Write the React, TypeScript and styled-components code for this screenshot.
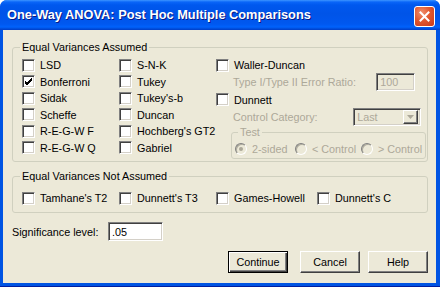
import React from "react";
import styled, { createGlobalStyle } from "styled-components";

const GlobalStyle = createGlobalStyle`
  html, body {
    margin: 0;
    padding: 0;
    background: #ffffff;
  }
  body {
    font-family: "Liberation Sans", Arial, sans-serif;
    font-size: 10.8px;
    color: #000000;
  }
`;

const Window = styled.div`
  width: 440px;
  height: 287px;
  box-sizing: border-box;
  display: flex;
  flex-direction: column;
  background: #0054e3;
  border-radius: 7px 7px 0 0;
  overflow: hidden;
  border-bottom: 1px solid #001ea0;
`;

const TitleBar = styled.div`
  height: 30px;
  flex: 0 0 30px;
  display: flex;
  align-items: flex-start;
  justify-content: space-between;
  padding: 0 5px 0 7px;
  box-sizing: border-box;
  background: linear-gradient(
    to bottom,
    #3d95ff 0px,
    #0a66f8 2px,
    #0058ee 5px,
    #0054e8 14px,
    #0058f0 24px,
    #0062fc 27px,
    #0049d6 29px,
    #003dc8 30px
  );
`;

const Title = styled.span`
  margin-top: 7px;
  font-family: "Liberation Sans", Arial, sans-serif;
  font-weight: bold;
  font-size: 12.8px;
  color: #ffffff;
  text-shadow: 1px 1px 0 #0a1883;
  white-space: nowrap;
`;

const CloseButton = styled.div`
  margin-top: 6px;
  width: 21px;
  height: 21px;
  box-sizing: border-box;
  border: 1px solid #ffffff;
  border-radius: 3px;
  background: radial-gradient(circle at 35% 30%, #f1906e 0%, #e2582f 45%, #c8381a 100%);
  display: flex;
  align-items: center;
  justify-content: center;
`;

const Client = styled.div`
  flex: 1;
  margin: 0 4px 3px 3px;
  background: #ece9d8;
  padding: 11px 8px 0 9px;
  display: flex;
  flex-direction: column;
`;

const GroupBox = styled.fieldset<{ $top?: number }>`
  margin: ${(p) => p.$top ?? 0}px 0 0 0;
  border: 1px solid #d0d0bf;
  border-radius: 3px;
  min-width: 0;
  box-sizing: border-box;
  padding: ${(p) => (p.$top ? "7px 3px 6px 9px" : "3px 3px 2px 9px")};
`;

const Legend = styled.legend`
  padding: 0 2px;
  margin-left: -2px;
  line-height: 13px;
  color: #000000;
`;

const AssumedGrid = styled.div`
  display: grid;
  grid-template-columns: 97px 97px 1fr;
`;

const Column = styled.div`
  display: grid;
  grid-auto-rows: 16.5px;
`;

const RightColumn = styled.div`
  display: flex;
  flex-direction: column;
`;

const Item = styled.label<{ $h?: number }>`
  display: flex;
  align-items: center;
  height: ${(p) => p.$h ?? 16}px;
  gap: 5px;
  white-space: nowrap;
`;

const Box = styled.span`
  width: 13px;
  height: 13px;
  flex: 0 0 13px;
  box-sizing: border-box;
  background: #ffffff;
  border: 1px solid;
  border-color: #808080 #ffffff #ffffff #808080;
  box-shadow: inset 1px 1px 0 #404040, inset -1px -1px 0 #d4d0c8;
  display: flex;
  align-items: center;
  justify-content: center;
`;

const OptionRow = styled.div<{ $h: number; $right: number }>`
  display: flex;
  align-items: center;
  justify-content: space-between;
  height: ${(p) => p.$h}px;
  padding: 0 ${(p) => p.$right}px 0 17px;
`;

const Dim = styled.span`
  color: #aca899;
  white-space: nowrap;
`;

const Field = styled.div<{ $w: number; $h: number; $disabled?: boolean }>`
  width: ${(p) => p.$w}px;
  height: ${(p) => p.$h}px;
  box-sizing: border-box;
  background: ${(p) => (p.$disabled ? "#ece9d8" : "#ffffff")};
  color: ${(p) => (p.$disabled ? "#aca899" : "#000000")};
  border: 1px solid;
  border-color: #808080 #ffffff #ffffff #808080;
  box-shadow: inset 1px 1px 0 #404040, inset -1px -1px 0 #d4d0c8;
  padding: 0 3px;
  display: flex;
  align-items: center;
`;

const Combo = styled(Field)`
  padding: 0 2px 0 3px;
  justify-content: space-between;
`;

const ComboButton = styled.span`
  width: 15px;
  height: 14px;
  box-sizing: border-box;
  background: #ece9d8;
  border: 1px solid;
  border-color: #ffffff #404040 #404040 #ffffff;
  box-shadow: inset -1px -1px 0 #808080;
  display: flex;
  align-items: center;
  justify-content: center;
`;

const TestGroup = styled.fieldset`
  margin: 0 0 0 15px;
  border: 1px solid #d0d0bf;
  border-radius: 3px;
  padding: 2px 3px 2px 3px;
  min-width: 0;
`;

const TestLegend = styled(Legend)`
  margin-left: 3px;
  color: #aca899;
`;

const RadioRow = styled.div`
  display: grid;
  grid-template-columns: 60px 66px 1fr;
  height: 15px;
  align-items: center;
`;

const Radio = styled.span<{ $on?: boolean }>`
  width: 12px;
  height: 12px;
  flex: 0 0 12px;
  box-sizing: border-box;
  border-radius: 50%;
  border: 1px solid;
  border-color: #808080 #ffffff #ffffff #808080;
  box-shadow: inset 1px 1px 0 #b0ad9e;
  background: #ece9d8;
  display: flex;
  align-items: center;
  justify-content: center;
  &::after {
    content: "";
    width: 4px;
    height: 4px;
    border-radius: 50%;
    background: ${(p) => (p.$on ? "#aca899" : "transparent")};
  }
`;

const NotAssumedGrid = styled.div`
  display: grid;
  grid-template-columns: 97px 97px 101px 1fr;
`;

const SigRow = styled.div`
  display: flex;
  align-items: center;
  margin-top: 9px;
  height: 19px;
`;

const SigLabel = styled.span`
  width: 96px;
`;

const ButtonRow = styled.div`
  display: flex;
  justify-content: flex-end;
  margin-top: 10px;
`;

const Button = styled.button<{ $default?: boolean; $gap: number }>`
  width: 60px;
  height: 22px;
  margin-left: ${(p) => p.$gap}px;
  box-sizing: border-box;
  font-family: "Liberation Sans", Arial, sans-serif;
  font-size: 10.8px;
  color: #000000;
  background: #ece9d8;
  padding: 0;
  border: 1px solid;
  border-color: ${(p) => (p.$default ? "#000000" : "#ffffff #404040 #404040 #ffffff")};
  box-shadow: ${(p) =>
    p.$default
      ? "inset 1px 1px 0 #ffffff, inset -1px -1px 0 #404040, inset -2px -2px 0 #808080"
      : "inset -1px -1px 0 #808080"};
`;

const Check = () => (
  <svg width="9" height="9" viewBox="0 0 9 9">
    <path d="M1 4 L3 6 L8 1 M1 5 L3 7 L8 2 M1 6 L3 8 L8 3" stroke="#000" strokeWidth="1" fill="none" />
  </svg>
);

const Option = ({ label, checked }: { label: string; checked?: boolean }) => (
  <Item>
    <Box>{checked && <Check />}</Box>
    <span>{label}</span>
  </Item>
);

const col1 = ["LSD", "Bonferroni", "Sidak", "Scheffe", "R-E-G-W F", "R-E-G-W Q"];
const col2 = ["S-N-K", "Tukey", "Tukey's-b", "Duncan", "Hochberg's GT2", "Gabriel"];
const notAssumed = ["Tamhane's T2", "Dunnett's T3", "Games-Howell", "Dunnett's C"];

export default function App() {
  return (
    <>
      <GlobalStyle />
      <Window>
        <TitleBar>
          <Title>One-Way ANOVA: Post Hoc Multiple Comparisons</Title>
          <CloseButton>
            <svg width="11" height="11" viewBox="0 0 11 11">
              <path d="M1.5 1.5 L9.5 9.5 M9.5 1.5 L1.5 9.5" stroke="#fff" strokeWidth="2" strokeLinecap="square" />
            </svg>
          </CloseButton>
        </TitleBar>
        <Client>
          <GroupBox>
            <Legend>Equal Variances Assumed</Legend>
            <AssumedGrid>
              <Column>
                {col1.map((l) => (
                  <Option key={l} label={l} checked={l === "Bonferroni"} />
                ))}
              </Column>
              <Column>
                {col2.map((l) => (
                  <Option key={l} label={l} />
                ))}
              </Column>
              <RightColumn>
                <Option label="Waller-Duncan" />
                <OptionRow $h={18} $right={11}>
                  <Dim>Type I/Type II Error Ratio:</Dim>
                  <Field $w={39} $h={18} $disabled>
                    100
                  </Field>
                </OptionRow>
                <Item $h={17}>
                  <Box />
                  <span>Dunnett</span>
                </Item>
                <OptionRow $h={18} $right={5}>
                  <Dim>Control Category:</Dim>
                  <Combo $w={68} $h={18} $disabled>
                    <span>Last</span>
                    <ComboButton>
                      <svg width="7" height="4" viewBox="0 0 7 4">
                        <path d="M0 0 H7 L3.5 4 Z" fill="#aca899" />
                      </svg>
                    </ComboButton>
                  </Combo>
                </OptionRow>
                <TestGroup>
                  <TestLegend>Test</TestLegend>
                  <RadioRow>
                    <Item $h={15}>
                      <Radio $on />
                      <Dim>2-sided</Dim>
                    </Item>
                    <Item $h={15}>
                      <Radio />
                      <Dim>&lt; Control</Dim>
                    </Item>
                    <Item $h={15}>
                      <Radio />
                      <Dim>&gt; Control</Dim>
                    </Item>
                  </RadioRow>
                </TestGroup>
              </RightColumn>
            </AssumedGrid>
          </GroupBox>
          <GroupBox $top={8}>
            <Legend>Equal Variances Not Assumed</Legend>
            <NotAssumedGrid>
              {notAssumed.map((l) => (
                <Option key={l} label={l} />
              ))}
            </NotAssumedGrid>
          </GroupBox>
          <SigRow>
            <SigLabel>Significance level:</SigLabel>
            <Field $w={55} $h={19}>
              .05
            </Field>
          </SigRow>
          <ButtonRow>
            <Button $default $gap={0}>
              Continue
            </Button>
            <Button $gap={12}>Cancel</Button>
            <Button $gap={8}>Help</Button>
          </ButtonRow>
        </Client>
      </Window>
    </>
  );
}
